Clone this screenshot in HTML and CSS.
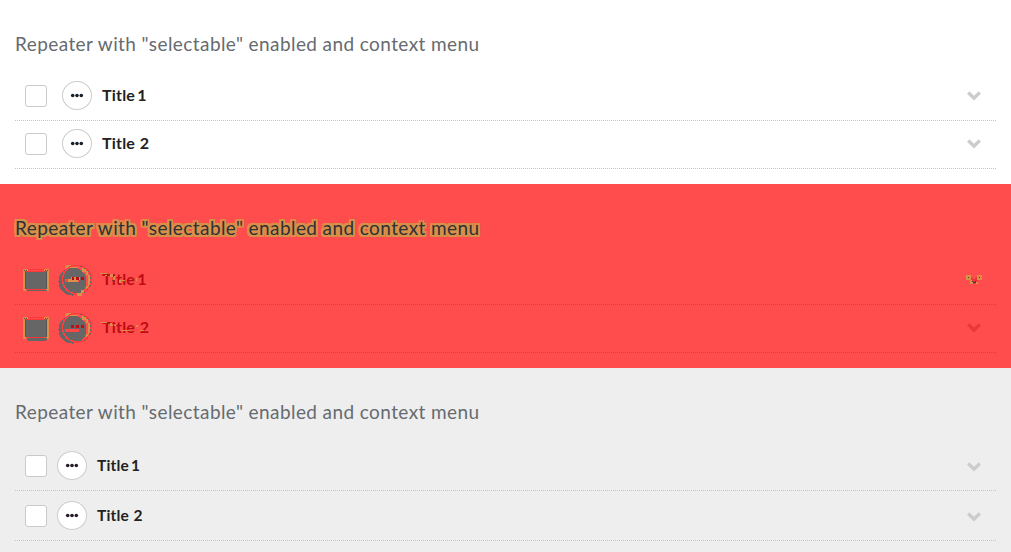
FILE: index.html
```html
<!DOCTYPE html>
<html lang="en">
<head>
<meta charset="utf-8">
<title>Repeater</title>
<link rel="stylesheet" href="styles.css">
</head>
<body>
<svg class="defs" aria-hidden="true">
  <symbol id="dots" viewBox="0 0 14 5"><circle cx="2.7" cy="2.500" r="1.8"/><circle cx="7" cy="2.500" r="1.8"/><circle cx="11.300" cy="2.500" r="1.8"/></symbol>
  <symbol id="chevron" viewBox="0 0 14 10"><path d="M1.200 1.500 7 7.200 12.800 1.500" fill="none" stroke="currentColor" stroke-width="3.300"/></symbol>
  <symbol id="diff-box" viewBox="0 0 26 26">
    <path fill="#d89149" d="M0 1h5v2H3v20H0zM21 1h5v22h-3V3h-2z"/>
    <path fill="#666" d="M2 4h22v17H2zM4 22h20v1H4z"/>
    <path fill="none" stroke="#ff3636" d="M5 1.500h16M3 3.500h20M4 21.500h18"/>
    <path fill="#555" d="M1 2h1v1H1zM3 2h1v1H3zM2 3h1v1H2zM22 2h1v1h-1zM24 2h1v1h-1zM23 3h1v1h-1zM2 4h1v17H2zM23 4h1v17h-1z"/>
  </symbol>
  <symbol id="diff-circle" viewBox="0 0 36 34">
    <path d="M7 5l1-5h5v2h7v3H10v2zM24 3h4v3h2v4h2v12h-2v4h-2v-5h2V10h-2V7h-4z" fill="#d89149"/>
    <circle cx="14.500" cy="16.500" r="14" fill="#666"/>
    <circle cx="19" cy="14.500" r="14.500" fill="none" stroke="#ff3e3e" stroke-width="1.600"/>
    <path d="M22 1.500q11 3 11 13t-9 14" fill="none" stroke="#666" stroke-dasharray="2 2"/>
  </symbol>
</svg>

<section class="panel">
  <h2 class="heading">Repeater with "selectable" enabled and context menu</h2>
  <div class="row"><span class="box"></span><span class="menu"><svg class="dots"><use href="#dots"/></svg></span><span class="title">Title <span class="one">1</span></span><svg class="chevron"><use href="#chevron"/></svg></div>
  <div class="row"><span class="box"></span><span class="menu"><svg class="dots"><use href="#dots"/></svg></span><span class="title">Title <span class="two">2</span></span><svg class="chevron"><use href="#chevron"/></svg></div>
</section>

<section class="panel diff">
  <h2 class="heading">Repeater with "selectable" enabled and context menu</h2>
  <div class="row">
    <svg class="diff-box"><use href="#diff-box"/></svg>
    <svg class="diff-circle" viewBox="0 0 36 34"><use href="#diff-circle"/><path d="M7 14h14v3H7z" fill="#ff4545"/><path fill="#d89149" d="M10 14h3v-2h9v3h-2v2H10zM19 28h4v-3h3v3h-2v3h-5z"/><path fill="#b80c12" d="M14 12h2v3h-2zM18 12h3v3h-3zM23 12h3v3h-3z"/></svg>
    <span class="title">Title <span class="one">1</span><svg class="marks" viewBox="0 0 48 20"><path d="M-2 4h7v1h-7zM3 6h2v1H3zM8 5h3v2h3v1H8zM11 8h2v3h-2zM17 11h6v1h-4v2h-2zM34 9h1v3h-1z" fill="#d89149"/><path d="M11 7h1v1h-1zM10 11h1v1h-1zM22 12h1v1h-1z" fill="#783a35"/></svg></span>
    <svg class="chevron"><use href="#chevron"/><path d="M-1 0h5v5h-5zM10 0h5v5h-5zM3 5h2v2h1v2H3zM11 7h-2v2h2z" fill="#d89149"/><path d="M1 2h1v1H1zM12 2h1v1h-1zM5 6h1v1h2V6h1v2H6V7H5z" fill="#46383a"/><path d="M4 2h1v1h1v1h2V3h1V2h1v2H9v2H5V4H4z" fill="#ee3438"/></svg>
  </div>
  <div class="row">
    <svg class="diff-box"><use href="#diff-box"/><path d="M4 22h20v2H4zM5 24h18v1H5z" fill="#666"/></svg>
    <svg class="diff-circle" viewBox="0 0 36 34"><use href="#diff-circle"/><path d="M7 16h14v3H7z" fill="#ff4545"/><path fill="#c30c12" d="M13 12h3v3h-3zM18 12h3v3h-3zM23 12h3v3h-3z"/></svg>
    <span class="title">Title <span class="two">2</span><svg class="marks" viewBox="0 0 48 20"><path d="M-1 5h6v1h-6zM8 6h2v2h4v1H8zM19 13h9v1H19zM34 8h2v2h-2zM38 13h4v1h-4z" fill="#d89149"/><path d="M11 8h1v1h-1zM17 12h1v1h-1z" fill="#783a35"/></svg></span>
    <svg class="chevron"><use href="#chevron"/><path d="M1.500 3l4 4M12.500 3l-4 4" fill="none" stroke="#b96c45" stroke-dasharray="1 1"/></svg>
  </div>
</section>

<section class="panel grey">
  <h2 class="heading">Repeater with "selectable" enabled and context menu</h2>
  <div class="row"><span class="box"></span><span class="menu"><svg class="dots"><use href="#dots"/></svg></span><span class="title">Title <span class="one">1</span></span><svg class="chevron"><use href="#chevron"/></svg></div>
  <div class="row"><span class="box"></span><span class="menu"><svg class="dots"><use href="#dots"/></svg></span><span class="title">Title <span class="two">2</span></span><svg class="chevron"><use href="#chevron"/></svg></div>
</section>
</body>
</html>
```
FILE: styles.css
```css
* { box-sizing: border-box; }
body { margin: 0; font-family: Lato, "Open Sans", sans-serif; color: #222; background: #fff; }
.defs { display: none; }
.panel { height: 184px; padding: 33px 15px 0; }
.heading { margin: 0 0 18px; height: 22px; font-size: 19px; line-height: 22px; font-weight: 400; letter-spacing: 0.42px; word-spacing: -0.1px; color: #666b70; white-space: nowrap; }
.row { height: 48px; display: flex; align-items: flex-start; padding: 8px 15px 0 10px; border-bottom: 1px dotted #c4c5c6; }
.box { width: 22px; height: 22px; margin-top: 4px; border: 1px solid #c9cacb; border-radius: 3px; background: #fff; }
.menu { width: 30px; height: 29px; margin-left: 15px; border: 1px solid #cbcccd; border-radius: 50%; background: #fff; display: flex; align-items: center; justify-content: center; color: #17212b; }
.dots { width: 14px; height: 5px; fill: currentColor; }
.title { margin-left: 10px; font-size: 16px; line-height: 27px; font-weight: 700; letter-spacing: 0.2px; white-space: nowrap; position: relative; }
.one { margin-left: -2px; }
.two { margin-left: 0.5px; }
.chevron { width: 14px; height: 10px; margin: 10px 0 0 auto; color: #cbccce; overflow: visible; }

.diff { background: #ff4d4d; }
.diff .heading { color: #303035; text-shadow: 2px 0 #d89149, -2px 0 #d89149, 0 2px #d89149, 0 -2px #d89149, 2px 2px #d89149, -2px 2px #d89149, 2px -2px #d89149, -2px -2px #d89149, 1px 1px #d89149, -1px 1px #d89149; }
.diff .row { border-color: #e93438; }
.diff .title { color: #bd0c12; margin-left: 8px; }
.diff .chevron { color: #ee3438; }
.diff-box { width: 26px; height: 26px; margin: 3px 0 0 -2px; shape-rendering: crispEdges; }
.diff-circle { width: 36px; height: 34px; margin-left: 9px; shape-rendering: crispEdges; }
.marks { position: absolute; left: 0; top: 4px; width: 48px; height: 20px; overflow: visible; shape-rendering: crispEdges; }

.grey { background: #eee; }
.grey .row { height: 50px; padding-top: 10px; }
.grey .menu { margin-left: 10px; color: #241c28; }
.grey .title { font-size: 15.5px; line-height: 29px; }
.grey .chevron { margin-top: 11px; }
```
